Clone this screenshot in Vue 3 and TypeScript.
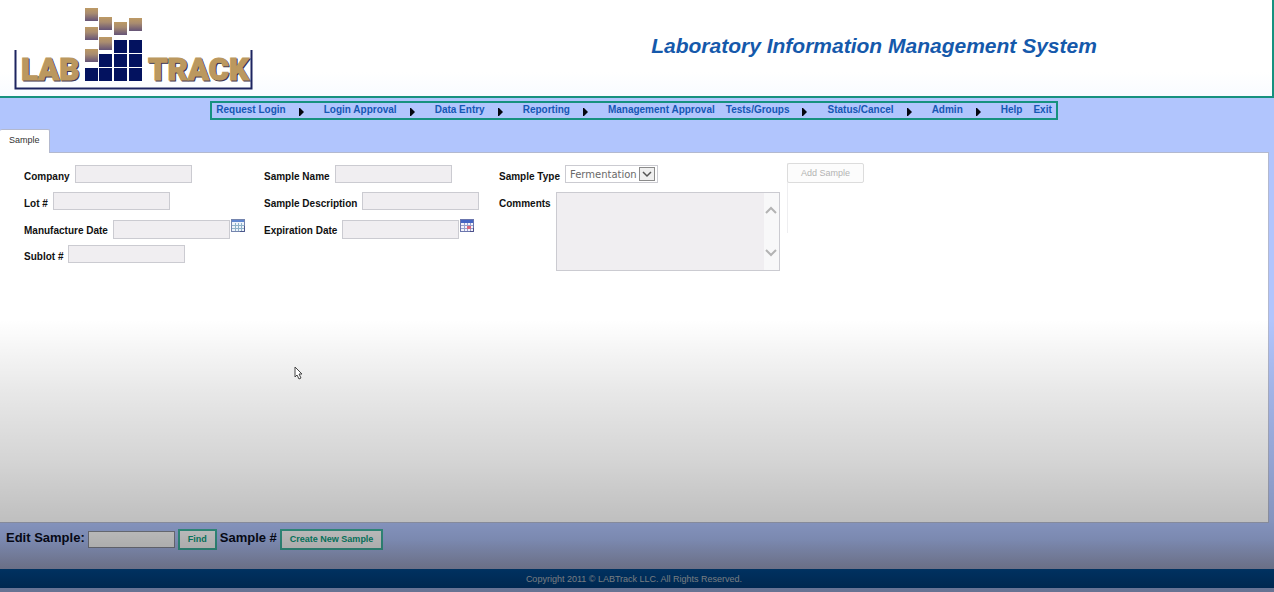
<script setup lang="ts">
import { ref } from 'vue'

interface MenuItem {
  label: string
  submenu: boolean
}

const menu: MenuItem[] = [
  { label: 'Request Login', submenu: true },
  { label: 'Login Approval', submenu: true },
  { label: 'Data Entry', submenu: true },
  { label: 'Reporting', submenu: true },
  { label: 'Management Approval', submenu: false },
  { label: 'Tests/Groups', submenu: true },
  { label: 'Status/Cancel', submenu: true },
  { label: 'Admin', submenu: true },
  { label: 'Help', submenu: false },
  { label: 'Exit', submenu: false },
]

const tanTiles: [number, number][] = [
  [85, 8], [85, 27], [85, 49], [99, 17], [99, 37], [114, 22], [129, 18],
]
const navyTiles: [number, number][] = [
  [85, 68], [99, 54], [99, 68], [114, 40], [114, 54], [114, 68], [129, 40], [129, 54], [129, 68],
]

const company = ref('')
const lot = ref('')
const manufactured = ref('')
const sublot = ref('')
const sampleName = ref('')
const description = ref('')
const expires = ref('')
const sampleType = ref('Fermentation')
const comments = ref('')
const editSample = ref('')
</script>

<template>
  <div class="page">
    <header class="banner">
      <svg class="logo" width="256" height="94" viewBox="0 0 256 94" role="img" aria-label="LAB TRACK">
        <defs>
          <linearGradient id="tan" x1="0" y1="0" x2="0" y2="1">
            <stop offset="0" stop-color="#bd9a64" />
            <stop offset="0.4" stop-color="#a98c70" />
            <stop offset="1" stop-color="#655477" />
          </linearGradient>
        </defs>
        <path d="M15.5 50V88.5H251.5V50" fill="none" stroke="#1d2460" stroke-width="2" />
        <rect v-for="([x, y], i) in tanTiles" :key="'t' + i" :x="x" :y="y" width="13" height="13" fill="url(#tan)" />
        <rect v-for="([x, y], i) in navyTiles" :key="'n' + i" :x="x" :y="y" width="13" height="13" fill="#03125f" />
        <g class="logo-shadow">
          <text x="22" y="81">LAB</text>
          <text x="149" y="81">TRACK</text>
        </g>
        <g class="logo-face">
          <text x="21" y="80">LAB</text>
          <text x="148" y="80">TRACK</text>
        </g>
      </svg>
      <h1>Laboratory Information Management System</h1>
    </header>

    <div class="nav-row">
      <nav class="menu">
        <a v-for="item in menu" :key="item.label" href="#" :class="{ parent: item.submenu }">
          {{ item.label }}
          <svg v-if="item.submenu" width="5" height="8" viewBox="0 0 5 8" aria-hidden="true">
            <path d="M0 0H1L5 4L1 8H0Z" fill="#05060f" />
          </svg>
        </a>
      </nav>
    </div>

    <div class="tabs">
      <button type="button" class="tab">Sample</button>
    </div>

    <main class="panel">
      <form class="sample-form" @submit.prevent>
        <div class="column">
          <div class="field"><label for="company">Company</label><input id="company" v-model="company" type="text" /></div>
          <div class="field"><label for="lot">Lot #</label><input id="lot" v-model="lot" type="text" /></div>
          <div class="field date">
            <label for="made">Manufacture Date</label><input id="made" v-model="manufactured" type="text" />
            <button type="button" class="calendar" aria-label="Pick manufacture date">
              <svg width="14" height="13" viewBox="0 0 14 13">
                <rect x="0.5" y="0.5" width="13" height="12" fill="#edf3fa" stroke="#7585ae" />
                <rect x="1" y="1" width="12" height="2" fill="#5f86d0" />
                <path d="M1 6.5H13M1 9.5H13M4.5 4V12M7.5 4V12M10.5 4V12" stroke="#8fb2c8" />
                <path d="M9 12.5H13.5V7" fill="none" stroke="#4b568a" />
              </svg>
            </button>
          </div>
          <div class="field"><label for="sublot">Sublot #</label><input id="sublot" v-model="sublot" type="text" /></div>
        </div>

        <div class="column">
          <div class="field"><label for="name">Sample Name</label><input id="name" v-model="sampleName" type="text" /></div>
          <div class="field"><label for="desc">Sample Description</label><input id="desc" v-model="description" type="text" /></div>
          <div class="field date">
            <label for="expires">Expiration Date</label><input id="expires" v-model="expires" type="text" />
            <button type="button" class="calendar" aria-label="Pick expiration date">
              <svg width="14" height="13" viewBox="0 0 14 13">
                <rect x="0.5" y="0.5" width="13" height="12" fill="#f4f3fa" stroke="#6b76ad" />
                <rect x="1" y="1" width="12" height="3" fill="#4565c4" />
                <path d="M1 6.5H13M1 9.5H13M4.5 4V12M7.5 4V12M10.5 4V12" stroke="#98a0cc" />
                <rect x="7" y="7" width="4" height="3" fill="#d9687c" />
                <path d="M10 12.5H13.5V9" fill="none" stroke="#4b4f8a" />
              </svg>
            </button>
          </div>
        </div>

        <div class="column">
          <div class="field">
            <label for="type">Sample Type</label>
            <div class="select-box">
              <select id="type" v-model="sampleType"><option>Fermentation</option></select>
              <span class="drop" aria-hidden="true">
                <svg width="10" height="7" viewBox="0 0 10 7"><path d="M1 1L5 5L9 1" fill="none" stroke="#555" stroke-width="1.5" /></svg>
              </span>
            </div>
          </div>
          <div class="field">
            <label for="comments">Comments</label>
            <div class="comment-box">
              <textarea id="comments" v-model="comments"></textarea>
              <div class="scroller" aria-hidden="true">
                <svg width="12" height="8" viewBox="0 0 12 8"><path d="M1 7L6 2L11 7" fill="none" stroke="#b3b3b3" stroke-width="2" /></svg>
                <svg width="12" height="8" viewBox="0 0 12 8"><path d="M1 1L6 6L11 1" fill="none" stroke="#b3b3b3" stroke-width="2" /></svg>
              </div>
            </div>
          </div>
        </div>

        <div class="actions">
          <button type="button" class="add">Add Sample</button>
        </div>
      </form>
    </main>

    <section class="edit-bar">
      <label for="edit">Edit Sample:</label>
      <input id="edit" v-model="editSample" type="text" />
      <button type="button">Find</button>
      <span class="number">Sample #</span>
      <button type="button">Create New Sample</button>
    </section>

    <footer class="copyright">Copyright 2011 © LABTrack LLC. All Rights Reserved.</footer>

    <div class="shade" aria-hidden="true"></div>
    <svg class="pointer" width="9" height="14" viewBox="0 0 9 14" aria-hidden="true">
      <path d="M1 1V11L3 9L5 13L7 12L5 8H8Z" fill="#fff" stroke="#444" />
    </svg>
  </div>
</template>

<style>
body {
  margin: 0;
}
</style>

<style scoped>
.page {
  position: relative;
  display: flex;
  flex-direction: column;
  min-height: 100vh;
  box-sizing: border-box;
  padding-bottom: 4px;
  background: #b1c5fd;
  font-family: "Liberation Sans", Arial, sans-serif;
  font-size: 10px;
  line-height: 12px;
  color: #111;
}

.page *,
.page *::before {
  box-sizing: border-box;
}

button,
input,
select,
textarea {
  margin: 0;
  font-family: inherit;
}

.banner {
  display: grid;
  grid-template-columns: 256px 1fr;
  height: 98px;
  border-right: 2px solid #16917f;
  border-bottom: 2px solid #16917f;
  background: linear-gradient(#fff 75%, #f8fbff);
}

.logo {
  display: block;
}

.logo text {
  font-family: Roboto, "Liberation Sans", sans-serif;
  font-size: 31px;
  font-weight: 900;
}

.logo-shadow {
  fill: #3c3550;
  stroke: #3c3550;
  stroke-width: 1px;
}

.logo-face {
  fill: #bb985f;
  stroke: #bb985f;
  stroke-width: 1px;
}

h1 {
  justify-self: center;
  margin: 34px 0 0 220px;
  font-size: 21px;
  line-height: 24px;
  font-style: italic;
  color: #1559ab;
  white-space: nowrap;
}

.nav-row {
  display: flex;
  justify-content: center;
  height: 31px;
  padding: 3px 6px 0 0;
}

.menu {
  display: flex;
  gap: 11px;
  height: 19px;
  padding: 1px 4px 0;
  border: 2px solid #16917f;
}

.menu a {
  display: flex;
  gap: 13px;
  color: #1657b4;
  font-weight: bold;
  text-decoration: none;
  white-space: nowrap;
}

.menu .parent {
  padding-right: 9px;
}

.menu svg {
  margin-top: 4px;
}

.tabs {
  display: flex;
  height: 23px;
}

.tab {
  height: 24px;
  padding: 0 9px 3px;
  border: 1px solid #b3b9cf;
  border-width: 1px 1px 0 0;
  border-radius: 2px 2px 0 0;
  background: #fff;
  color: #333;
  font-size: 9px;
  z-index: 1;
}

.panel {
  flex: 1;
  margin-right: 5px;
  padding: 12px 0 12px 24px;
  border: 1px solid #b3b9cf;
  border-left: 0;
  background: #fff;
}

.sample-form {
  display: grid;
  grid-template-columns: 240px 235px 288px 1fr;
}

.field {
  display: flex;
  align-items: flex-start;
  gap: 5px;
  height: 27px;
}

.field.date {
  height: 26px;
}

.field label {
  padding-top: 6px;
  font-weight: bold;
  white-space: nowrap;
}

.field input {
  width: 117px;
  height: 18px;
  border: 1px solid #cbcbd1;
  background: #f0eef1;
}

.date input {
  height: 19px;
  margin-top: 1px;
}

.calendar {
  margin-left: -4px;
  padding: 0;
  border: 0;
  background: none;
  line-height: 0;
}

.select-box {
  position: relative;
}

select {
  display: block;
  width: 93px;
  height: 18px;
  padding: 0 4px;
  border: 1px solid #cbcbd1;
  border-radius: 0;
  appearance: none;
  background: #fff;
  color: #696969;
  font-family: "DejaVu Sans", Verdana, sans-serif;
  font-size: 10px;
}

.drop {
  position: absolute;
  top: 2px;
  right: 3px;
  display: grid;
  place-items: center;
  width: 16px;
  height: 14px;
  border: 1px solid #8b8b8b;
  background: #efefef;
  pointer-events: none;
}

.comment-box {
  display: flex;
  width: 224px;
  height: 79px;
  border: 1px solid #cbcbd1;
  background: #f0eef1;
}

textarea {
  flex: 1;
  min-width: 0;
  border: 0;
  background: none;
  resize: none;
}

.scroller {
  display: flex;
  flex-direction: column;
  justify-content: space-between;
  align-items: center;
  width: 15px;
  padding: 13px 0;
  background: #f8f8f9;
}

.actions {
  height: 70px;
  margin-top: -2px;
  border-left: 1px solid #eeeef0;
}

.add {
  display: block;
  width: 77px;
  height: 20px;
  margin-left: -1px;
  padding: 0;
  border: 1px solid #dcdcdc;
  border-radius: 2px;
  background: #fcfcfc;
  color: #b3b3b3;
  font-size: 9px;
}

.edit-bar {
  display: flex;
  align-items: center;
  gap: 3px;
  height: 46px;
  padding: 0 6px 14px;
  background: linear-gradient(#b0c4fc 35%, #acb3d8);
}

.edit-bar label,
.edit-bar .number {
  color: #080c1c;
  font-size: 13px;
  font-weight: bold;
  line-height: 16px;
  padding-bottom: 2px;
}

.edit-bar input {
  width: 87px;
  height: 17px;
  border: 1px solid #8a8d99;
  background: #fff;
}

.edit-bar button {
  height: 21px;
  padding: 0 8px;
  border: 2px solid #3fb5a0;
  background: #fff;
  color: #08a080;
  font-size: 9px;
  font-weight: bold;
}

.copyright {
  height: 19px;
  padding: 4px 6px 0 0;
  background: linear-gradient(#00509c, #004388);
  color: #c5ced6;
  font-size: 9px;
  text-align: center;
}

.shade {
  position: absolute;
  inset: 0;
  z-index: 2;
  background: linear-gradient(
    rgba(0, 0, 0, 0) 54%,
    rgba(0, 0, 0, 0.09) 66%,
    rgba(0, 0, 0, 0.17) 78%,
    rgba(0, 0, 0, 0.25) 88%,
    rgba(0, 0, 0, 0.38) 96%,
    rgba(0, 0, 0, 0.42)
  );
  pointer-events: none;
}

.pointer {
  position: absolute;
  top: 366px;
  left: 294px;
  z-index: 3;
}
</style>
